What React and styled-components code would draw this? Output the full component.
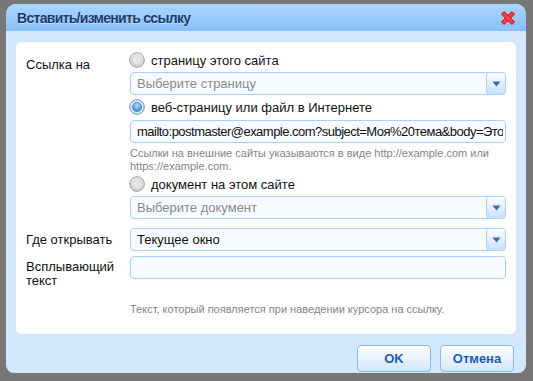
import React from "react";
import styled, { createGlobalStyle } from "styled-components";

const Global = createGlobalStyle`
  html, body { margin: 0; padding: 0; background: #777777; }
  body { font-family: "Liberation Sans", Arial, sans-serif; }
  * { box-sizing: border-box; }
`;

const Page = styled.div`
  width: 533px;
  height: 381px;
  padding: 4px 7px 8px 6px;
  background: #777777;
`;

const Dialog = styled.div`
  width: 520px;
  height: 369px;
  border-radius: 10px 10px 8px 8px;
  background: #d3e8fd;
  overflow: hidden;
  display: flex;
  flex-direction: column;
`;

const TitleBar = styled.div`
  height: 27px;
  flex: none;
  display: flex;
  align-items: center;
  justify-content: space-between;
  padding: 0 10px 0 11px;
  background: linear-gradient(#acd6ff, #86bff8);
`;

const Title = styled.h1`
  margin: 0;
  font-size: 14px;
  letter-spacing: -0.7px;
  font-weight: bold;
  color: #1b3c6d;
  text-shadow: 0 1px 0 rgba(255, 255, 255, 0.45);
  padding-top: 1px;
`;

const Body = styled.div`
  flex: 1;
  display: flex;
  flex-direction: column;
  padding: 11px 10px 10px 10px;
`;

const Panel = styled.div`
  background: #ffffff;
  border-radius: 6px;
  padding: 10px 10px 18px 10px;
  display: grid;
  grid-template-columns: 104px minmax(0, 1fr);
`;

const Label = styled.div`
  font-size: 13px;
  color: #111;
  line-height: 14px;
  padding-top: ${(p) => p.$top || 0}px;
  margin-top: ${(p) => p.$mt || 0}px;
`;

const Field = styled.div`
  display: flex;
  flex-direction: column;
  min-width: 0;
  margin-top: ${(p) => p.$mt || 0}px;
`;

const RadioRow = styled.label`
  display: flex;
  align-items: center;
  gap: 6px;
  height: 16px;
  margin-left: -1px;
  margin-top: ${(p) => p.$mt || 0}px;
  font-size: 13px;
  color: #111;
`;

const Box = styled.div`
  position: relative;
  height: 23px;
  margin-top: ${(p) => p.$mt || 0}px;
  border: 1px solid #a9d0f7;
  border-radius: 4px;
  background: #f7fbff;
  display: flex;
  align-items: center;
  padding-left: 6px;
  padding-right: 2px;
  font-size: 13px;
  letter-spacing: ${(p) => (p.$tight ? "-0.52px" : "normal")};
  color: ${(p) => (p.$placeholder ? "#8a8a8a" : "#111")};
  white-space: nowrap;
  overflow: hidden;
  min-width: 0;
`;

const BoxText = styled.span`
  flex: 1;
  min-width: 0;
  overflow: hidden;
`;

const DropButton = styled.div`
  position: absolute;
  right: -1px;
  top: -1px;
  bottom: -1px;
  width: 20px;
  border: 1px solid #a9d0f7;
  border-radius: 4px;
  background: linear-gradient(#ffffff, #c7e0f9);
  display: flex;
  align-items: center;
  justify-content: center;
`;

const Hint = styled.div`
  font-size: 11px;
  line-height: 13px;
  color: #858585;
  margin-top: ${(p) => p.$mt || 0}px;
`;

const Footer = styled.div`
  display: flex;
  justify-content: flex-end;
  gap: 9px;
  margin-top: 11px;
  padding-right: 2px;
`;

const Button = styled.button`
  width: 74px;
  height: 27px;
  border: 1px solid #86bdf0;
  border-radius: 4px;
  background: linear-gradient(#ffffff, #d3e7fb);
  font-family: "Liberation Sans", Arial, sans-serif;
  font-size: 13px;
  font-weight: bold;
  color: #1e5bb5;
  padding: 0;
`;

const CloseIcon = () => (
  <svg width="16" height="16" viewBox="0 0 16 16">
    <g transform="rotate(45 8 8)">
      <rect x="6" y="0.5" width="4" height="15" rx="1.2" fill="#ff3a3a" stroke="#c21414" strokeWidth="0.8" />
      <rect x="0.5" y="6" width="15" height="4" rx="1.2" fill="#ff3a3a" stroke="#c21414" strokeWidth="0.8" />
      <rect x="6.4" y="6.4" width="3.2" height="3.2" fill="#ff4545" />
    </g>
  </svg>
);

const Radio = ({ checked }) => (
  <svg width="16" height="16" viewBox="0 0 16 16">
    <defs>
      <radialGradient id="rg-off" cx="50%" cy="35%" r="65%">
        <stop offset="0" stopColor="#ffffff" />
        <stop offset="1" stopColor="#cfcfcf" />
      </radialGradient>
      <radialGradient id="rg-on" cx="50%" cy="35%" r="65%">
        <stop offset="0" stopColor="#bfe0ff" />
        <stop offset="1" stopColor="#2f7fd8" />
      </radialGradient>
    </defs>
    {checked ? (
      <>
        <circle cx="8" cy="8" r="7.3" fill="#dcecfb" stroke="#5a93d0" strokeWidth="1" />
        <circle cx="8" cy="8" r="4.6" fill="url(#rg-on)" stroke="#2f6fb8" strokeWidth="0.6" />
      </>
    ) : (
      <>
        <circle cx="8" cy="8" r="7.3" fill="url(#rg-off)" stroke="#9c9c9c" strokeWidth="1" />
        <circle cx="8" cy="8" r="4.8" fill="#e6e6e6" stroke="#c4c4c4" strokeWidth="0.6" />
      </>
    )}
  </svg>
);

const Arrow = () => (
  <svg width="9" height="6" viewBox="0 0 9 6">
    <path d="M0.5 0.5 L8.5 0.5 L4.5 5.5 Z" fill="#3a6db0" />
  </svg>
);

const Select = ({ value, placeholder, mt }) => (
  <Box $placeholder={placeholder} $mt={mt}>
    <BoxText>{value}</BoxText>
    <DropButton>
      <Arrow />
    </DropButton>
  </Box>
);

export default function App() {
  return (
    <Page>
      <Global />
      <Dialog>
        <TitleBar>
          <Title>Вставить/изменить ссылку</Title>
          <CloseIcon />
        </TitleBar>
        <Body>
          <Panel>
            <Label $top={6}>Ссылка на</Label>
            <Field>
              <RadioRow>
                <Radio />
                страницу этого сайта
              </RadioRow>
              <Select placeholder value="Выберите страницу" mt={4} />
              <RadioRow $mt={4}>
                <Radio checked />
                веб-страницу или файл в Интернете
              </RadioRow>
              <Box $mt={5} $tight>
                <BoxText>mailto:postmaster@example.com?subject=Моя%20тема&amp;body=Это</BoxText>
              </Box>
              <Hint $mt={4}>
                Ссылки на внешние сайты указываются в виде http://example.com или
                <br />
                https://example.com.
              </Hint>
              <RadioRow $mt={3}>
                <Radio />
                документ на этом сайте
              </RadioRow>
              <Select placeholder value="Выберите документ" mt={4} />
            </Field>

            <Label $mt={9} $top={5}>Где открывать</Label>
            <Field $mt={9}>
              <Select value="Текущее окно" />
            </Field>

            <Label $mt={5} $top={4}>Всплывающий<br />текст</Label>
            <Field $mt={5}>
              <Box />
            </Field>

            <div />
            <Hint $mt={15}>Текст, который появляется при наведении курсора на ссылку.</Hint>
          </Panel>
          <Footer>
            <Button>OK</Button>
            <Button>Отмена</Button>
          </Footer>
        </Body>
      </Dialog>
    </Page>
  );
}
